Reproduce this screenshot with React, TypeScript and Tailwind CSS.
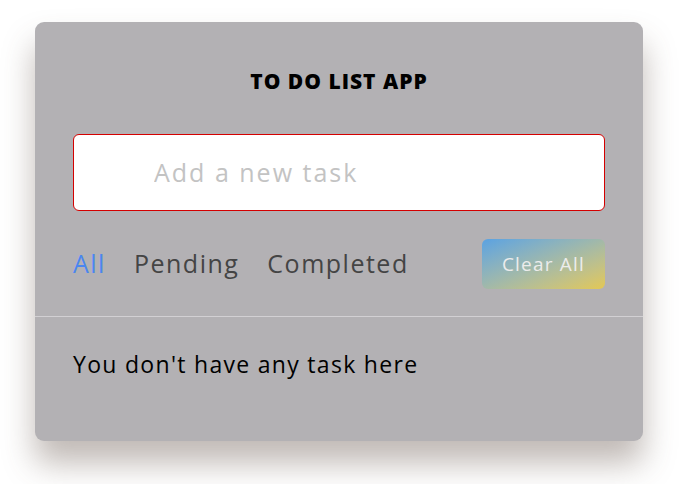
export default function App() {
  return (
    <div className="min-h-[484px] bg-white pt-[22px] pl-[35px]" style={{ fontFamily: '"Open Sans", "Noto Sans", sans-serif' }}>
      <div className="w-[608px] h-[419px] rounded-[9px] bg-[#b3b1b4] shadow-[0_22px_32px_rgba(90,70,60,0.38)]">
        <div className="px-[38px] pt-[44px]">
          <h1 className="text-center text-[21px] leading-[30px] font-extrabold text-black tracking-[1px]">TO DO LIST APP</h1>
          <div className="mt-[38px] h-[77px] rounded-[6px] border border-[#d40000] bg-white flex items-center pl-[80px]">
            <input
              className="w-full bg-transparent outline-none text-[25px] tracking-[2px] placeholder:text-[#c3c3c3]"
              placeholder="Add a new task"
            />
          </div>
          <div className="mt-[28px] h-[50px] flex items-center justify-between">
            <div className="flex items-center text-[25px] tracking-[1.5px] text-[#444]">
              <span className="text-[#4a86f0]">All</span>
              <span className="ml-[28px]">Pending</span>
              <span className="ml-[28px]">Completed</span>
            </div>
            <button className="w-[123px] h-[50px] rounded-[6px] bg-gradient-to-br from-[#5aa2e2] to-[#e3c852] text-[19px] tracking-[1.2px] text-[#ececec]">
              Clear All
            </button>
          </div>
        </div>
        <div className="mt-[27px] h-px bg-[#d2d0d3]" />
        <div className="px-[38px] pt-[31px]">
          <p className="text-[23px] leading-[33px] tracking-[1.3px] text-black">You don't have any task here</p>
        </div>
      </div>
    </div>
  );
}
